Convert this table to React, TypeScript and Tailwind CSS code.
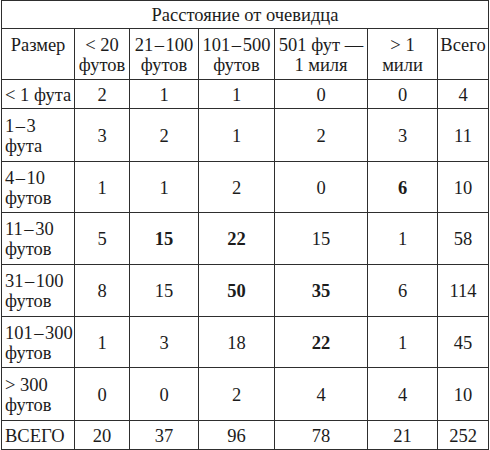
const COLS = ["73px", "55px", "69px", "76px", "93px", "70px", "51px"]

type Row = {
  label: string[]
  values: (number | { v: number; bold: true })[]
  height: string
}

const b = (v: number) => ({ v, bold: true as const })

// hair spaces around the dash, like the printed table
const d = (a: string, z: string) => a + "\u200a–\u200a" + z

const ROWS: Row[] = [
  { label: ["< 1 фута"], values: [2, 1, 1, 0, 0, 4], height: "h-[29px]" },
  { label: [d("1", "3"), "фута"], values: [3, 2, 1, 2, 3, 11], height: "h-[53px]" },
  { label: [d("4", "10"), "футов"], values: [1, 1, 2, 0, b(6), 10], height: "h-[51px]" },
  { label: [d("11", "30"), "футов"], values: [5, b(15), b(22), 15, 1, 58], height: "h-[52px]" },
  { label: [d("31", "100"), "футов"], values: [8, 15, b(50), b(35), 6, 114], height: "h-[52px]" },
  { label: [d("101", "300"), "футов"], values: [1, 3, 18, b(22), 1, 45], height: "h-[51px]" },
  { label: ["> 300", "футов"], values: [0, 0, 2, 4, 4, 10], height: "h-[53px]" },
  { label: ["ВСЕГО"], values: [20, 37, 96, 78, 21, 252], height: "h-[29px]" },
]

const HEADERS = [
  ["< 20", "футов"],
  [d("21", "100"), "футов"],
  [d("101", "500"), "футов"],
  ["501 фут —", "1 миля"],
  ["> 1", "мили"],
  ["Всего"],
]

const cell = "border-r border-b border-[#2e2e2e]"

export default function App() {
  return (
    <div className="[font-family:Liberation_Serif]">
      <div className="w-[490px] h-[450px] bg-white text-[#1c1c1c] text-[18.5px] leading-[20px]">
        <div
          className="ml-px grid w-[488px] border-l border-t border-[#2e2e2e]"
          style={{ gridTemplateColumns: COLS.join(" ") }}
        >
          {/* Title */}
          <div className={cell + " col-span-7 h-[28px] flex items-center justify-center pt-px"}>
            Расстояние от очевидца
          </div>

          {/* Column headers */}
          <div className={cell + " h-[51px] pt-[6px] text-center"}>Размер</div>
          {HEADERS.map((lines, i) => (
            <div key={i} className={cell + " h-[51px] pt-[6px] text-center"}>
              {lines.map((l) => (
                <div key={l}>{l}</div>
              ))}
            </div>
          ))}

          {/* Body */}
          {ROWS.map((row) => (
            <div key={row.label.join()} className="contents">
              <div className={cell + " " + row.height + " flex flex-col justify-center pl-[3px] pt-px"}>
                {row.label.map((l) => (
                  <div key={l} className="whitespace-nowrap">{l}</div>
                ))}
              </div>
              {row.values.map((val, i) => (
                <div
                  key={i}
                  className={cell + " " + row.height + " flex items-center justify-center pt-px"}
                >
                  {typeof val === "number" ? val : <span className="font-bold">{val.v}</span>}
                </div>
              ))}
            </div>
          ))}
        </div>
      </div>
    </div>
  )
}
